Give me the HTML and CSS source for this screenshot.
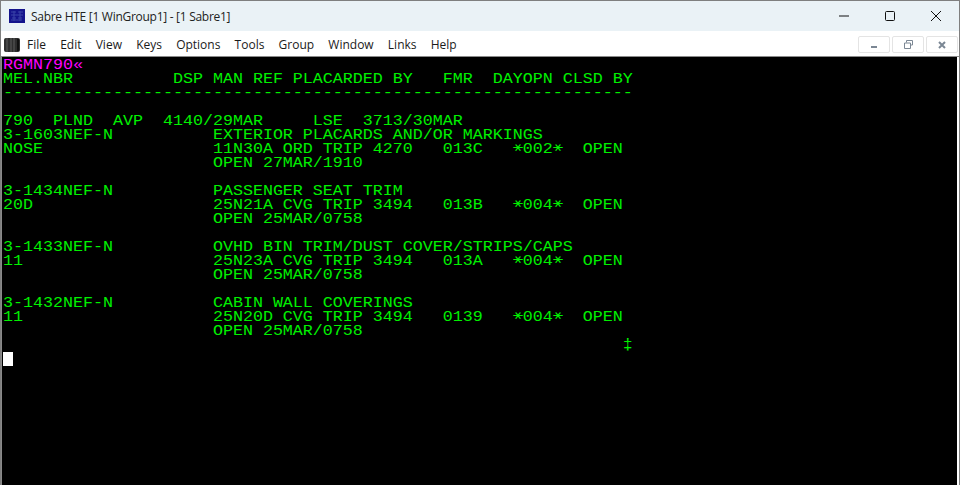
FILE: index.html
```html
<!DOCTYPE html>
<html lang="en">
<head>
<meta charset="utf-8">
<title>Sabre HTE</title>
<link rel="stylesheet" href="styles.css">
</head>
<body>
<div class="window">
  <header class="titlebar">
    <svg class="app-icon" width="16" height="14" viewBox="0 0 16 14"><rect width="16" height="14" fill="#14148c"/><path d="M2 3h5M9 3h5M2 6h12M3 9h4M9 9h4M2 11h11M5 2v10M11 2v10" stroke="#3a45a8" stroke-width="1" fill="none"/></svg>
    <span class="title">Sabre HTE [1 WinGroup1] - [1 Sabre1]</span>
    <div class="win-controls">
      <svg width="46" height="30" viewBox="0 0 46 30"><path d="M18 15h10" stroke="#111" stroke-width="1"/></svg>
      <svg width="46" height="30" viewBox="0 0 46 30"><rect x="18.5" y="10.500" width="9" height="9" rx="1" fill="none" stroke="#111"/></svg>
      <svg width="46" height="30" viewBox="0 0 46 30"><path d="M18 10l10 10M28 10l-10 10" stroke="#111" stroke-width="1"/></svg>
    </div>
  </header>
  <nav class="menubar">
    <svg class="menu-icon" width="16" height="16" viewBox="0 0 16 16"><rect x="0" y="1" width="16" height="14" rx="2" fill="#2e2e2e"/><path d="M3 1v14M7 1v14M10 1v14" stroke="#5c5c5c" stroke-width="1"/><path d="M14 2v12" stroke="#111" stroke-width="2"/></svg>
    <ul class="menu">
      <li>File</li><li>Edit</li><li>View</li><li>Keys</li><li>Options</li><li>Tools</li><li>Group</li><li>Window</li><li>Links</li><li>Help</li>
    </ul>
    <div class="mdi-controls">
      <button class="mdi"><svg width="8" height="8" viewBox="0 0 8 8"><rect x="1" y="5" width="6" height="2" fill="#7b8794"/></svg></button>
      <button class="mdi"><svg width="9" height="9" viewBox="0 0 9 9"><path d="M2.500 2.500V.5h6v4.500H6.500M.5 3h6v5.500h-6z" fill="none" stroke="#7b8794"/></svg></button>
      <button class="mdi"><svg width="8" height="8" viewBox="0 0 8 8"><path d="M1 1l6 6M7 1l-6 6" stroke="#7b8794" stroke-width="2"/></svg></button>
    </div>
  </nav>
  <main class="terminal">
<pre class="screen"><span class="cmd">RGMN790«</span>
MEL.NBR          DSP MAN REF PLACARDED BY   FMR  DAYOPN CLSD BY
---------------------------------------------------------------

790  PLND  AVP  4140/29MAR     LSE  3713/30MAR
3-1603NEF-N          EXTERIOR PLACARDS AND/OR MARKINGS
NOSE                 11N30A ORD TRIP 4270   013C   <span class="star">⚹</span>002<span class="star">⚹</span>  OPEN
                     OPEN 27MAR/1910

3-1434NEF-N          PASSENGER SEAT TRIM
20D                  25N21A CVG TRIP 3494   013B   <span class="star">⚹</span>004<span class="star">⚹</span>  OPEN
                     OPEN 25MAR/0758

3-1433NEF-N          OVHD BIN TRIM/DUST COVER/STRIPS/CAPS
11                   25N23A CVG TRIP 3494   013A   <span class="star">⚹</span>004<span class="star">⚹</span>  OPEN
                     OPEN 25MAR/0758

3-1432NEF-N          CABIN WALL COVERINGS
11                   25N20D CVG TRIP 3494   0139   <span class="star">⚹</span>004<span class="star">⚹</span>  OPEN
                     OPEN 25MAR/0758
                                                              ‡
<span class="cursor"> </span></pre>
  </main>
</div>
</body>
</html>
```
FILE: styles.css
```css
* { box-sizing: border-box; }
html, body { margin: 0; height: 100%; background: #fff; overflow: hidden; }
.window {
  width: 960px; height: 485px;
  display: flex; flex-direction: column;
  border: 1px solid #7f7f7f; border-bottom: 0;
  font-family: "Open Sans", "Noto Sans", sans-serif;
  color: #111;
}
.titlebar {
  height: 30px; flex: none;
  display: flex; align-items: center;
  background: #eaf2f6;
  padding-left: 8px;
}
.app-icon { flex: none; }
.title { margin-left: 6px; font-size: 12px; letter-spacing: -0.28px; color: #222; }
.win-controls { margin-left: auto; display: flex; margin-right: 0; }
.win-controls svg { display: block; }
.menubar {
  height: 26px; flex: none;
  display: flex; align-items: center;
  background: #fff;
  padding: 2px 0 0 3px;
  border-bottom: 1px solid #8a8a8a;
}
.menu-icon { flex: none; }
.menu {
  list-style: none; margin: 0 0 0 7px; padding: 0;
  display: flex; gap: 14.2px;
  font-size: 12px; color: #1a1a1a;
}
.mdi-controls { margin-left: auto; display: flex; gap: 2px; margin-right: 1px; }
.mdi {
  width: 32px; height: 17px; padding: 0;
  display: flex; align-items: center; justify-content: center;
  background: #fff; border: 1px solid #e4e4e4; border-radius: 2px;
}
.terminal {
  flex: 1; min-height: 0;
  background: #000;
  margin-right: 2px;
  border-left: 1px solid #8a8a8a;
  padding: 1px 0 0 1px;
  overflow: hidden;
}
.screen {
  margin: 0;
  font-family: "Liberation Mono", monospace;
  font-size: 16.67px;
  line-height: 16px;
  height: 480px;
  transform: scaleY(0.875);
  transform-origin: left top;
  color: #00f000;
}
.cmd { color: #ff00ff; }
.star {
  display: inline-block; width: 10px; text-align: center;
  font-size: 11.9px;
  line-height: 16px;
  transform: translateY(-2px) scale(1.4, 1.15);
  font-family: "DejaVu Sans", sans-serif;
}
.cursor { display: inline-block; width: 10px; height: 16px; background: #fff; vertical-align: top; }
```
